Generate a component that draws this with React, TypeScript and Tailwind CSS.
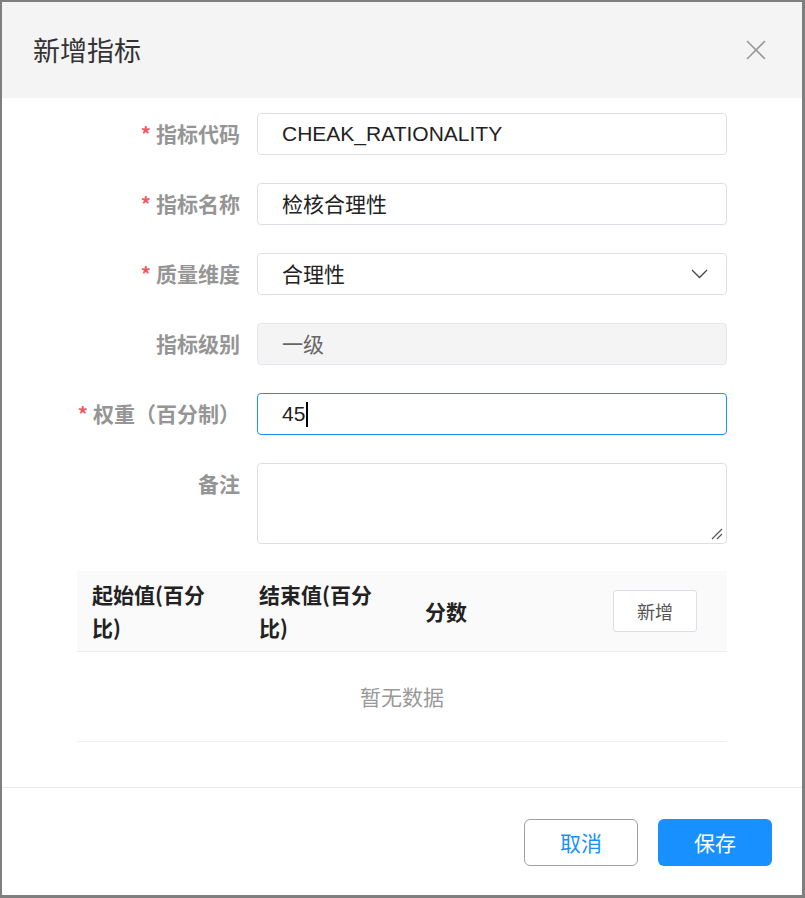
import React from 'react';

const cjk = { fontFamily: '"Noto Sans CJK SC", "Noto Sans", sans-serif' };
const latin = { fontFamily: '"Liberation Sans", "Noto Sans CJK SC", sans-serif' };

const Label: React.FC<{ text: string; required?: boolean }> = ({ text, required }) => (
  <div className="w-[238px] h-[42px] flex items-center justify-end shrink-0 text-[21px] font-bold text-[#959595]" style={cjk}>
    {required && <span className="text-[#f5565c] mr-[5px] text-[20px] leading-none">*</span>}
    {text}
  </div>
);

export default function App() {
  return (
    <div className="w-[805px] h-[898px] bg-[#7f7f7f] pt-[2px] pl-[2px] pr-[3px] pb-[3px]" style={cjk}>
      <div className="w-[800px] h-[893px] bg-white flex flex-col">
        {/* header */}
        <div className="h-[96px] bg-[#f4f4f4] flex items-center justify-between pl-[31px] pr-[36px] shrink-0">
          <span className="text-[27px] text-[#333]">新增指标</span>
          <svg width="20" height="20" viewBox="0 0 20 20" className="text-[#9a9a9a]">
            <path d="M1 1 L19 19 M19 1 L1 19" stroke="currentColor" strokeWidth="1.6" fill="none" />
          </svg>
        </div>

        {/* body */}
        <div className="flex-1 pt-[15px]">
          <div className="flex flex-col gap-[28px]">
            <div className="flex">
              <Label text="指标代码" required />
              <div className="ml-[17px] w-[470px] h-[42px] border border-[#dcdfe6] rounded-[4px] flex items-center pl-[24px] text-[21px] text-[#222]" style={latin}>
                CHEAK_RATIONALITY
              </div>
            </div>
            <div className="flex">
              <Label text="指标名称" required />
              <div className="ml-[17px] w-[470px] h-[42px] border border-[#dcdfe6] rounded-[4px] flex items-center pl-[24px] text-[21px] text-[#222]">
                检核合理性
              </div>
            </div>
            <div className="flex">
              <Label text="质量维度" required />
              <div className="ml-[17px] w-[470px] h-[42px] border border-[#dcdfe6] rounded-[4px] flex items-center justify-between pl-[24px] pr-[18px] text-[21px] text-[#222]">
                <span>合理性</span>
                <svg width="17" height="10" viewBox="0 0 17 10">
                  <path d="M1 1 L8.5 8.5 L16 1" stroke="#444" strokeWidth="1.3" fill="none" />
                </svg>
              </div>
            </div>
            <div className="flex">
              <Label text="指标级别" />
              <div className="ml-[17px] w-[470px] h-[42px] border border-[#e4e7ed] bg-[#f4f4f4] rounded-[4px] flex items-center pl-[24px] text-[21px] text-[#666]">
                一级
              </div>
            </div>
            <div className="flex">
              <Label text="权重（百分制）" required />
              <div className="ml-[17px] w-[470px] h-[42px] border border-[#1890ff] rounded-[4px] flex items-center pl-[24px] text-[21px] text-[#222]" style={latin}>
                45
                <span className="w-[2px] h-[25px] bg-black ml-px" />
              </div>
            </div>
            <div className="flex items-start">
              <Label text="备注" />
              <div className="ml-[17px] w-[470px] h-[81px] border border-[#dcdfe6] rounded-[4px] flex items-end justify-end p-[3px]">
                <svg width="12" height="12" viewBox="0 0 12 12">
                  <path d="M11 1 L1 11 M11 6 L6 11" stroke="#555" strokeWidth="1.2" fill="none" />
                </svg>
              </div>
            </div>
          </div>

          {/* table */}
          <div className="ml-[75px] mt-[27px] w-[650px]">
            <div className="grid grid-cols-[167px_166px_166px_151px] h-[81px] bg-[#fafafa] border-b border-[#ebeef5] items-center text-[21px] font-bold text-[#222] leading-[33px]">
              <div className="px-[15px]">起始值(百分<br />比)</div>
              <div className="px-[15px]">结束值(百分<br />比)</div>
              <div className="px-[15px]">分数</div>
              <div className="pl-[37px]">
                <button className="w-[84px] h-[42px] border border-[#dcdfe6] bg-white rounded-[3px] text-[18px] font-normal text-[#555] leading-none">
                  新增
                </button>
              </div>
            </div>
            <div className="h-[90px] border-b border-[#ebeef5] flex items-center justify-center text-[21px] text-[#999]">
              暂无数据
            </div>
          </div>
        </div>

        {/* footer */}
        <div className="h-[108px] border-t border-[#e8e8e8] flex items-start justify-end gap-[20px] pt-[31px] pr-[30px] shrink-0">
          <button className="w-[114px] h-[47px] border border-[#a0a0a0] rounded-[6px] bg-white text-[21px] text-[#1890ff]">
            取消
          </button>
          <button className="w-[114px] h-[47px] rounded-[6px] bg-[#1890ff] text-[21px] text-white">
            保存
          </button>
        </div>
      </div>
    </div>
  );
}
